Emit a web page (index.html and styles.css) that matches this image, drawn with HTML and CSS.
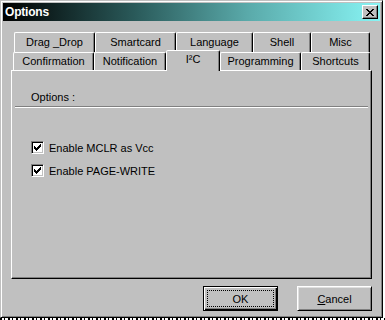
FILE: index.html
```html
<!DOCTYPE html>
<html lang="en">
<head>
    <meta charset="UTF-8">
    <meta name="viewport" content="width=device-width, initial-scale=1.0">
    <title>Options</title>
    <link rel="stylesheet" href="styles.css">
</head>
<body>
    <div class="window">
        <div class="titlebar">
            <span class="title">Options</span>
            <button class="close-btn" aria-label="Close">
                <svg width="8" height="7" viewBox="0 0 8 7" shape-rendering="crispEdges">
                    <path fill="#000" d="M0 0h2v1H0zM6 0h2v1H6zM1 1h2v1H1zM5 1h2v1H5zM2 2h4v1H2zM3 3h2v1H3zM2 4h4v1H2zM1 5h2v1H1zM5 5h2v1H5zM0 6h2v1H0zM6 6h2v1H6z"/>
                </svg>
            </button>
        </div>

        <div class="content">
            <div class="tab-row back">
                <div class="tab t-drag">Drag _Drop</div>
                <div class="tab t-smart">Smartcard</div>
                <div class="tab t-lang">Language</div>
                <div class="tab t-shell">Shell</div>
                <div class="tab t-misc">Misc</div>
            </div>
            <div class="tab-row front">
                <div class="tab t-confirm">Confirmation</div>
                <div class="tab t-notify">Notification</div>
                <div class="tab t-i2c selected">I²C</div>
                <div class="tab t-prog">Programming</div>
                <div class="tab t-short">Shortcuts</div>
            </div>

            <div class="tab-panel">
                <div class="group-label">Options :</div>
                <label class="check first">
                    <span class="box">
                        <svg width="7" height="7" viewBox="0 0 7 7" shape-rendering="crispEdges">
                            <path fill="#000" d="M6 0h1v1H6zM5 1h2v1H5zM0 2h1v1H0zM4 2h3v1H4zM0 3h2v1H0zM3 3h3v1H3zM0 4h5v1H0zM1 5h3v1H1zM2 6h1v1H2z"/>
                        </svg>
                    </span>
                    Enable MCLR as Vcc
                </label>
                <label class="check">
                    <span class="box">
                        <svg width="7" height="7" viewBox="0 0 7 7" shape-rendering="crispEdges">
                            <path fill="#000" d="M6 0h1v1H6zM5 1h2v1H5zM0 2h1v1H0zM4 2h3v1H4zM0 3h2v1H0zM3 3h3v1H3zM0 4h5v1H0zM1 5h3v1H1zM2 6h1v1H2z"/>
                        </svg>
                    </span>
                    Enable PAGE-WRITE
                </label>
            </div>

            <div class="buttons">
                <button class="btn default"><span class="focus">OK</span></button>
                <button class="btn"><u>C</u>ancel</button>
            </div>
        </div>
    </div>
    <div class="strip"></div>
</body>
</html>
```

FILE: styles.css
```css
body {
    margin: 0;
    background-color: #fff;
    font-family: 'Liberation Sans', Arial, sans-serif;
    font-size: 11px;
    color: #000;
}
.window {
    width: 383px;
    height: 318px;
    box-sizing: border-box;
    background-color: #c0c0c0;
    border: 1px solid;
    border-color: #c0c0c0 #000 #000 #c0c0c0;
    box-shadow: inset 1px 1px #fff, inset -1px -1px #808080;
    padding: 2px;
}
.titlebar {
    height: 18px;
    display: flex;
    align-items: center;
    justify-content: space-between;
    padding: 0 2px;
    background: linear-gradient(to right, #000 0%, #2a5a5a 35%, #5aaaaa 65%, #88f4f4 100%);
}
.title {
    color: #fff;
    font-weight: bold;
    font-size: 12px;
    letter-spacing: -0.2px;
}
.close-btn {
    width: 16px;
    height: 14px;
    padding: 0;
    display: flex;
    align-items: center;
    justify-content: center;
    background-color: #c0c0c0;
    border: 1px solid;
    border-color: #fff #000 #000 #fff;
    box-shadow: inset -1px -1px #808080;
}
.content {
    padding: 0 8px;
}

/* tabs */
.tab-row {
    display: flex;
}
.tab-row.back {
    margin-top: 11px;
    margin-left: 3px;
    height: 20px;
}
.tab-row.front {
    margin-left: 2px;
    height: 18px;
    align-items: flex-start;
}
.tab {
    box-sizing: border-box;
    height: 100%;
    display: flex;
    align-items: center;
    justify-content: center;
    border: 1px solid;
    border-bottom: 0;
    border-color: #fff #000 transparent #fff;
    border-radius: 2px 2px 0 0;
    box-shadow: inset -1px 0 #808080;
    padding-bottom: 1px;
}
.tab.selected {
    height: 21px;
    margin-top: -2px;
    position: relative;
    z-index: 1;
    background-color: #c0c0c0;
    padding-bottom: 5px;
}
.t-drag { width: 81px; }
.t-smart { width: 81px; }
.t-lang { width: 77px; }
.t-shell { width: 58px; }
.t-misc { width: 59px; }
.t-confirm { width: 81px; }
.t-notify { width: 72px; }
.t-i2c { width: 54px; }
.t-prog { width: 81px; }
.t-short { width: 69px; }

.tab-panel {
    height: 209px;
    box-sizing: border-box;
    border: 1px solid;
    border-color: #fff #000 #000 #fff;
    box-shadow: inset -1px -1px #808080;
    padding: 0 3px;
}
.group-label {
    margin-top: 19px;
    height: 17px;
    box-sizing: border-box;
    padding-left: 16px;
    line-height: 14px;
    border-bottom: 1px solid #808080;
    box-shadow: 0 1px #fff;
}
.check {
    display: flex;
    align-items: center;
    height: 13px;
    margin-left: 16px;
    margin-top: 10px;
}
.check.first {
    margin-top: 34px;
}
.box {
    width: 13px;
    height: 13px;
    box-sizing: border-box;
    margin-right: 5px;
    display: flex;
    align-items: center;
    justify-content: center;
    background-color: #fff;
    border: 1px solid;
    border-color: #808080 #fff #fff #808080;
    box-shadow: inset 1px 1px #000, inset -1px -1px #c0c0c0;
}

/* buttons */
.buttons {
    display: flex;
    justify-content: flex-end;
    gap: 19px;
    margin-top: 7px;
}
.btn {
    width: 75px;
    height: 25px;
    box-sizing: border-box;
    padding: 0;
    font-family: 'Liberation Sans', Arial, sans-serif;
    font-size: 11px;
    color: #000;
    background-color: #c0c0c0;
    border: 1px solid;
    border-color: #fff #000 #000 #fff;
    box-shadow: inset 1px 1px #dfdfdf, inset -1px -1px #808080;
}
.btn.default {
    border-color: #000;
    box-shadow: inset 1px 1px #fff, inset -1px -1px #000, inset -2px -2px #808080;
    display: flex;
    padding: 3px;
}
.focus {
    flex: 1;
    display: flex;
    align-items: center;
    justify-content: center;
    border: 1px dotted #000;
}
.strip {
    height: 2px;
    background: repeating-linear-gradient(to right, #000 0 2px, #fff 2px 4px, #000 4px 5px, #fff 5px 8px);
}
```
